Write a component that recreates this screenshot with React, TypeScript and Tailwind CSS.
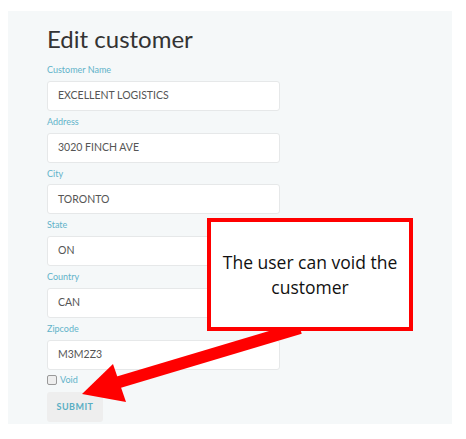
const fields = [
  { label: "Customer Name", value: "EXCELLENT LOGISTICS" },
  { label: "Address", value: "3020 FINCH AVE" },
  { label: "City", value: "TORONTO" },
  { label: "State", value: "ON" },
  { label: "Country", value: "CAN" },
  { label: "Zipcode", value: "M3M2Z3" },
];

function Field({ label, value }: { label: string; value: string }) {
  return (
    <div className="flex flex-col">
      <label className="block h-[21.8px] text-[9px] leading-[21px] text-[#62b3c9]">{label}</label>
      <div className="flex h-[30px] w-[233px] items-center rounded-[3px] border border-[#e6e8e9] bg-white px-[10px] text-[10.5px] text-[#555]">
        {value}
      </div>
    </div>
  );
}

export default function App() {
  return (
    <div className="relative h-[439px] w-[466px] bg-white" style={{ fontFamily: "Lato, sans-serif" }}>
      <div className="ml-[8px] mt-[11px] h-[413px] w-[444px] bg-[#f5f8f9] pl-[39px]">
        <h1 className="h-[48px] pt-[15px] text-[24px] leading-[26px] text-[#333]">Edit customer</h1>
        {fields.map((f) => (
          <Field key={f.label} label={f.label} value={f.value} />
        ))}
        <div className="mt-[4px] flex h-[12px] items-center gap-[3px]">
          <span className="block h-[10px] w-[10px] rounded-[2px] border border-[#999] bg-[#eee]" />
          <span className="text-[9px] leading-[12px] text-[#62b3c9]">Void</span>
        </div>
        <button className="mt-[6px] flex h-[30px] w-[56px] items-center justify-center rounded-[3px] bg-[#eeeeee] text-[9px] font-bold tracking-wider text-[#5aaec4]">
          SUBMIT
        </button>
      </div>

      <svg className="absolute left-0 top-0" width="466" height="439" viewBox="0 0 466 439">
        <line x1="116" y1="372" x2="300" y2="317" stroke="#ff0000" strokeWidth="12" />
        <polygon points="82,383 113,353 126,391" fill="#ff0000" />
      </svg>

      <div
        className="absolute left-[207px] top-[207px] flex h-[113px] w-[206px] items-center justify-center border-[4px] border-[#ff0000] bg-white text-center text-[17.5px] leading-[25px] text-[#111]"
        style={{ fontFamily: "'Open Sans', sans-serif" }}
      >
        <p>
          The user can void the
          <br />
          customer
        </p>
      </div>
    </div>
  );
}
